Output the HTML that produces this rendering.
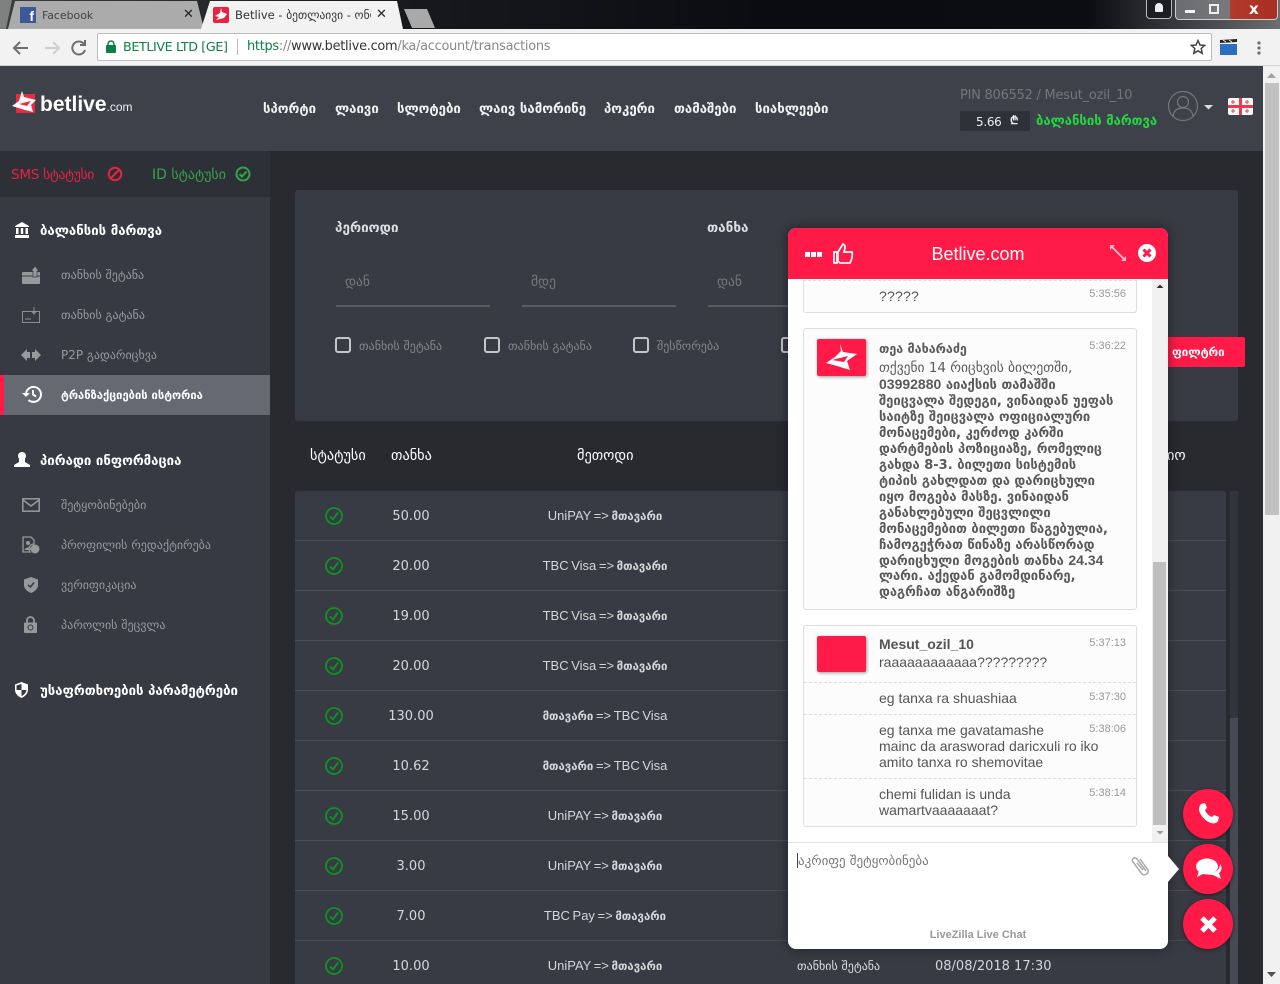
<!DOCTYPE html>
<html lang="ka"><head><meta charset="utf-8"><title>Betlive</title>
<style>
*{box-sizing:border-box}
html,body{margin:0;padding:0;width:1280px;height:984px;overflow:hidden;background:#292a30}
body{position:relative;font-family:"Liberation Sans","DejaVu Sans",sans-serif}
.a{position:absolute;white-space:nowrap}
svg{position:absolute;display:block}
.nav{top:102px;font:bold 13.2px/16px "DejaVu Sans",sans-serif;color:#f2f2f2}
.h{font:bold 13.2px/16px "DejaVu Sans",sans-serif;color:#fff;left:40px}
.s{font:12px/16px "DejaVu Sans",sans-serif;color:#98999c;left:61px}
.line{position:absolute;left:295px;width:931px;height:1px;background:#4a4c57}
.n{left:371px;width:80px;text-align:center;font:13px/16px "DejaVu Sans",sans-serif;color:#d6d6d8;margin-top:1px}
.m{left:480px;width:250px;text-align:center;font:13px/16px "Liberation Sans","DejaVu Sans",sans-serif;word-spacing:-1px;color:#d6d6d8}
.m span{font:bold 11.4px/16px "DejaVu Sans",sans-serif;word-spacing:0}
.c{color:#555;font:14px/16px "Liberation Sans",sans-serif}
.k{color:#5a5a5a;font:bold 13px/16px "DejaVu Sans",sans-serif;left:91px}
.t{color:#999;font:11px/14px "Liberation Sans",sans-serif;right:42px}
.b{position:absolute;left:15px;width:334px;background:#fcfcfc;border:1px solid #ddd;border-radius:3px}
.d{position:absolute;left:16px;width:332px;border-top:1px dashed #ddd}
.cb{position:absolute;top:337px;width:16px;height:16px;border:2px solid #c5c6c8;border-radius:3px}
.cl{top:338px;font:12px/16px "DejaVu Sans",sans-serif;color:#85868b}
.f{font:13.5px/16px "DejaVu Sans",sans-serif;color:#77787d;top:274px}
.u{position:absolute;top:305px;height:2px;background:#5c5c60}
.th{top:448px;font:14.3px/16px "DejaVu Sans",sans-serif;color:#fff}
.fab{position:absolute;left:1183px;width:50px;height:50px;border-radius:50%;background:#ff1a47;box-shadow:0 1px 4px rgba(0,0,0,.5)}
</style></head><body>

<!-- browser chrome -->
<div class="a" style="left:0;top:0;width:1280px;height:29px;background:linear-gradient(90deg,#3a3c3f 0,#1a1c20 25%,#0a0c11 60%,#0b0d12 85%,#6b6d70 100%)"></div>
<svg style="left:0;top:0" width="440" height="30"><path d="M0 0H12L6 29H0Z" fill="#7f8080"/><path d="M15 1H197L204 29H8Z" fill="#ababab"/><path d="M210 1H397L403 29H201Z" fill="#f2f2f2"/><path d="M404 9H427L435 28H412Z" fill="#a9a9a9"/></svg>
<div class="a" style="left:20px;top:7px;width:16px;height:16px;background:#3b5998;color:#fff;font:bold 14px/18px 'Liberation Sans';text-align:right;padding-right:2px;overflow:hidden">f</div>
<div class="a" style="left:42px;top:8px;font:10.9px/16px 'DejaVu Sans';color:#444">Facebook</div>
<div class="a" style="left:183px;top:6px;font:bold 13px/18px 'DejaVu Sans';color:#222">✕</div>
<div class="a" style="left:213px;top:7px;width:16px;height:16px;background:#e8223f;border-radius:2px"></div>
<svg style="left:213px;top:7px" width="16" height="16"><path d="M8 1L9 5L14 7L11 11L3 13L6 10L2 9L7 6Z" fill="#fff"/></svg>
<div class="a" style="left:235px;top:7px;width:136px;overflow:hidden;font:11.5px/16px 'DejaVu Sans';color:#333">Betlive - ბეთლაივი - ონლ</div>
<div class="a" style="left:376px;top:6px;font:bold 13px/18px 'DejaVu Sans';color:#222">✕</div>
<!-- window buttons -->
<div class="a" style="left:1146px;top:0;width:26px;height:19px;background:#1c1e21;border:1px solid #bbb;border-top:0;border-radius:0 0 4px 4px"></div>
<div class="a" style="left:1155px;top:3px;width:8px;height:9px;background:#eee;border-radius:4px 4px 1px 1px"></div>
<div class="a" style="left:1175px;top:0;width:103px;height:20px;background:linear-gradient(90deg,#6a6c6f 0,#77797b 53%,#b23a2b 54%,#a82f22 100%);border:1px solid #ccc;border-top:0;border-radius:0 0 4px 4px"></div>
<div class="a" style="left:1185px;top:10px;width:10px;height:3px;background:#f3f3f3"></div>
<div class="a" style="left:1209px;top:4px;width:10px;height:10px;border:2px solid #eee"></div>
<div class="a" style="left:1249px;top:0;font:bold 15px/18px 'DejaVu Sans';color:#fff">x</div>
<!-- toolbar -->
<div class="a" style="left:0;top:29px;width:1280px;height:37px;background:#f2f2f2;border-bottom:1px solid #d2d2d2"></div>
<svg style="left:10px;top:36px" width="80" height="22" fill="none" stroke-width="2"><path d="M18 12H4M10 6L4 12L10 18" stroke="#6e6e6e"/><path d="M35 12H49M43 6L49 12L43 18" stroke="#cfcfcf"/><path d="M74 8A6.5 6.5 0 1 0 75 14M75 4V9H70" stroke="#6e6e6e"/></svg>
<div class="a" style="left:97px;top:33px;width:1115px;height:28px;background:#fff;border:1px solid #bcbcbc;border-radius:2px"></div>
<svg style="left:105px;top:40px" width="12" height="14"><rect x="1" y="5" width="10" height="8" rx="1" fill="#0b8043"/><path d="M3 6V4A3 3 0 0 1 9 4V6" fill="none" stroke="#0b8043" stroke-width="1.5"/></svg>
<div class="a" style="left:123px;top:39px;font:12.7px/16px 'DejaVu Sans';letter-spacing:-.03em;color:#0b8043">BETLIVE LTD [GE]</div>
<div class="a" style="left:237px;top:39px;width:1px;height:16px;background:#bbb"></div>
<div class="a" style="left:247px;top:39px;font:12.9px/16px 'DejaVu Sans';letter-spacing:-.02em;color:#888"><span style="color:#0b8043">https</span>://<span style="color:#333">www.betlive.com</span>/ka/account/transactions</div>
<svg style="left:1190px;top:39px" width="16" height="16"><path d="M8 1.5L10 6L14.7 6.4L11.2 9.5L12.2 14.3L8 11.8L3.8 14.3L4.8 9.5L1.3 6.4L6 6Z" fill="none" stroke="#444" stroke-width="1.5"/></svg>
<svg style="left:1220px;top:39px" width="18" height="16"><rect y="5" width="17" height="11" fill="#2a6fc0"/><path d="M0 1L17 0V3L0 4Z" fill="#222"/><path d="M3 1L6 3M9 1L12 3" stroke="#eee"/></svg>
<svg style="left:1257px;top:41px" width="4" height="14" fill="#6e6e6e"><circle cx="2" cy="2" r="1.6"/><circle cx="2" cy="7" r="1.6"/><circle cx="2" cy="12" r="1.6"/></svg>

<!-- site header -->
<div class="a" style="left:0;top:66px;width:1263px;height:85px;background:#3e4149"></div>
<svg style="left:11px;top:90px" width="27" height="26"><rect x="5" y="4" width="19" height="19" fill="#ec2a3f"/><path d="M11 1L13 7L25 10L20 15L22 22L14 20L1 16L8 11Z" fill="#fff"/><path d="M8 14L20 11L16 16Z" fill="#ec2a3f"/></svg>
<div class="a" style="left:40px;top:91px;font:bold 21px/28px 'Liberation Sans';color:#fff">betlive<span style="font:12px/16px 'Liberation Sans';color:#eee">.com</span></div>
<div class="a nav" style="left:263px">სპორტი</div>
<div class="a nav" style="left:335px">ლაივი</div>
<div class="a nav" style="left:397px">სლოტები</div>
<div class="a nav" style="left:479px">ლაივ სამორინე</div>
<div class="a nav" style="left:604px">პოკერი</div>
<div class="a nav" style="left:674px">თამაშები</div>
<div class="a nav" style="left:755px">სიახლეები</div>
<div class="a" style="left:960px;top:87px;font:13px/18px 'DejaVu Sans';letter-spacing:-.25px;color:#74767b">PIN 806552 / Mesut_ozil_10</div>
<div class="a" style="left:960px;top:111px;width:70px;height:20px;background:#2f3138;border-radius:2px"></div>
<div class="a" style="left:976px;top:114px;font:12px/16px 'DejaVu Sans';letter-spacing:-.3px;color:#eee">5.66</div>
<div class="a" style="left:1010px;top:113px;font:bold 11px/16px 'DejaVu Sans';color:#eee">₾</div>
<div class="a" style="left:1036px;top:114px;font:bold 13.1px/16px 'DejaVu Sans';color:#22d840">ბალანსის მართვა</div>
<svg style="left:1167px;top:90px" width="48" height="32" fill="none" stroke="#74767b" stroke-width="1.2"><circle cx="16" cy="16" r="14.5"/><circle cx="16" cy="12" r="5.5"/><path d="M6 26C7 20 11 18 16 18S25 20 26 26"/><path d="M37 15H46L41.500 19.500Z" fill="#ddd" stroke="none"/></svg>
<svg style="left:1228px;top:98px" width="26" height="18"><rect width="25" height="17" rx="2" fill="#fafafa"/><path d="M11 0H14V17H11ZM0 7H25V10H0Z" fill="#ec3a4b"/><path d="M5 2V6M3 4H7M19 2V6M17 4H21M5 11V15M3 13H7M19 11V15M17 13H21" stroke="#ec3a4b"/></svg>

<!-- sidebar -->
<div class="a" style="left:0;top:151px;width:270px;height:46px;background:#2e3038"></div>
<div class="a" style="left:0;top:197px;width:270px;height:787px;background:#383a43"></div>
<div class="a" style="left:11px;top:167px;font:13.6px/16px 'DejaVu Sans';letter-spacing:-.3px;color:#e5243f">SMS სტატუსი</div>
<svg style="left:107px;top:166px" width="16" height="16" fill="none" stroke="#e5243f" stroke-width="2"><circle cx="8" cy="8" r="6.300"/><path d="M3.500 12.500L12.500 3.500"/></svg>
<div class="a" style="left:152px;top:167px;font:14px/16px 'DejaVu Sans';color:#36a348">ID სტატუსი</div>
<svg style="left:235px;top:166px" width="16" height="16" fill="none" stroke="#36a348" stroke-width="2"><circle cx="8" cy="8" r="6.500"/><path d="M4.500 8L7 10.500L11.500 5.500"/></svg>

<svg style="left:14px;top:222px" width="16" height="16" fill="#fff"><path d="M8 0L15 4V5H1V4Z"/><path d="M2 6H4.500V12H2ZM6.800 6H9.200V12H6.800ZM11.500 6H14V12H11.500ZM1 13H15V16H1Z"/></svg>
<div class="a h" style="top:224px">ბალანსის მართვა</div>
<svg style="left:22px;top:266px" width="18" height="18"><rect y="6" width="18" height="12" rx="1" fill="#98999c"/><path d="M0 10H18" stroke="#383a43"/><path d="M13 0L17 5H15V11H11V5H9Z" fill="#98999c" stroke="#383a43" stroke-width=".7"/></svg>
<div class="a s" style="top:267px">თანხის შეტანა</div>
<svg style="left:22px;top:306px" width="18" height="18" fill="none" stroke="#8c8d91"><rect x=".5" y="5.500" width="17" height="11"/><path d="M12 1V7M9.500 5L12 8L14.500 5M3 13H9"/></svg>
<div class="a s" style="top:307px">თანხის გატანა</div>
<svg style="left:21px;top:349px" width="20" height="12" fill="#98999c"><path d="M0 6L6 0V3H9V9H6V12ZM20 6L14 12V9H11V3H14V0Z"/></svg>
<div class="a s" style="top:347px">P2P გადარიცხვა</div>
<div class="a" style="left:0;top:375px;width:270px;height:40px;background:#666972"></div>
<div class="a" style="left:0;top:375px;width:4px;height:40px;background:#ff1a47"></div>
<svg style="left:22px;top:385px" width="20" height="18" fill="none" stroke="#fff" stroke-width="2"><path d="M4 9A7.500 7.500 0 1 1 6.500 15"/><path d="M0 8L4 12L8 8" fill="#fff" stroke="none"/><path d="M11 5V9.500L14 11.500"/></svg>
<div class="a s" style="top:388px;color:#fff;font-weight:bold;font-size:11.2px">ტრანზაქციების ისტორია</div>

<svg style="left:14px;top:452px" width="16" height="15" fill="#fff"><circle cx="8" cy="4" r="4"/><path d="M5 7H11L11 10L16 13V15H0V13L5 10Z"/></svg>
<div class="a h" style="top:454px">პირადი ინფორმაცია</div>
<svg style="left:22px;top:498px" width="18" height="15" fill="none" stroke="#98999c" stroke-width="1.500"><rect x=".8" y=".8" width="16.400" height="12.400"/><path d="M1 2L9 8L17 2"/></svg>
<div class="a s" style="top:497px">შეტყობინებები</div>
<svg style="left:22px;top:536px" width="18" height="18" fill="#98999c"><path d="M1 1H9L12 4V8A5 5 0 0 0 8 16H1Z" fill="none" stroke="#98999c" stroke-width="1.300"/><circle cx="6" cy="7" r="2"/><path d="M2.500 14C3 11 9 11 9 12L8 14Z"/><circle cx="13" cy="13" r="4.500"/></svg>
<div class="a s" style="top:537px">პროფილის რედაქტირება</div>
<svg style="left:24px;top:577px" width="14" height="16"><path d="M7 0L14 2.500V8C14 12 10 15 7 16C4 15 0 12 0 8V2.500Z" fill="#98999c"/><path d="M4 8L6.500 10L10 5.500" fill="none" stroke="#383a43" stroke-width="1.500"/></svg>
<div class="a s" style="top:577px">ვერიფიკაცია</div>
<svg style="left:24px;top:616px" width="13" height="17"><path d="M3 7V4.500A3.500 3.500 0 0 1 10 4.500V7" fill="none" stroke="#98999c" stroke-width="1.800"/><rect y="6.500" width="13" height="10.500" rx="1" fill="#98999c"/><circle cx="6.500" cy="11.500" r="2.500" fill="none" stroke="#383a43"/></svg>
<div class="a s" style="top:617px">პაროლის შეცვლა</div>
<svg style="left:15px;top:682px" width="13" height="16"><path d="M6.500 0L13 2.500V8C13 12 9 15 6.500 16C4 15 0 12 0 8V2.500Z" fill="#fff"/><path d="M6.500 2V8H1.500V3.500ZM6.500 8H11.500C11 11 9 13 6.500 14Z" fill="#383a43"/></svg>
<div class="a h" style="top:684px">უსაფრთხოების პარამეტრები</div>

<!-- main -->
<div class="a" style="left:295px;top:190px;width:943px;height:231px;background:#393b44;border-radius:3px"></div>
<div class="a" style="left:335px;top:220px;font:bold 13.5px/16px 'DejaVu Sans';color:#dedee0">პერიოდი</div>
<div class="a" style="left:707px;top:220px;font:bold 13.5px/16px 'DejaVu Sans';color:#dedee0">თანხა</div>
<div class="a f" style="left:345px">დან</div>
<div class="a f" style="left:531px">მდე</div>
<div class="a f" style="left:717px">დან</div>
<div class="u" style="left:336px;width:154px"></div>
<div class="u" style="left:522px;width:154px"></div>
<div class="u" style="left:708px;width:90px"></div>
<div class="cb" style="left:335px"></div><div class="a cl" style="left:359px">თანხის შეტანა</div>
<div class="cb" style="left:484px"></div><div class="a cl" style="left:508px">თანხის გატანა</div>
<div class="cb" style="left:633px"></div><div class="a cl" style="left:657px">შესწორება</div>
<div class="cb" style="left:781px"></div>
<div class="a" style="left:1160px;top:337px;width:85px;height:30px;background:#ff1a47;border-radius:2px"></div>
<div class="a" style="left:1172px;top:344px;font:bold 11.500px/16px 'DejaVu Sans';color:#fff">ფილტრი</div>

<div class="a th" style="left:310px">სტატუსი</div>
<div class="a th" style="left:391px">თანხა</div>
<div class="a th" style="left:577px">მეთოდი</div>
<div class="a th" style="left:1167px">იო</div>

<div class="a" style="left:295px;top:491px;width:931px;height:493px;background:#393b44;border-radius:3px 3px 0 0"></div>
<div class="a" style="left:1230px;top:491px;width:8px;height:493px;background:#33353d"></div>
<div class="a" style="left:1230px;top:718px;width:8px;height:266px;background:#474a55"></div>
<div class="line" style="top:540px"></div><div class="line" style="top:590px"></div><div class="line" style="top:640px"></div><div class="line" style="top:690px"></div><div class="line" style="top:740px"></div><div class="line" style="top:790px"></div><div class="line" style="top:840px"></div><div class="line" style="top:890px"></div><div class="line" style="top:940px"></div>

<svg style="left:325px;top:507px" width="18" height="470" fill="none" stroke="#0d9323" stroke-width="1.800"><g><circle cx="9" cy="9" r="8"/><path d="M5 9.500L8 12.500L13 5.500"/></g><g transform="translate(0 50)"><circle cx="9" cy="9" r="8"/><path d="M5 9.500L8 12.500L13 5.500"/></g><g transform="translate(0 100)"><circle cx="9" cy="9" r="8"/><path d="M5 9.500L8 12.500L13 5.500"/></g><g transform="translate(0 150)"><circle cx="9" cy="9" r="8"/><path d="M5 9.500L8 12.500L13 5.500"/></g><g transform="translate(0 200)"><circle cx="9" cy="9" r="8"/><path d="M5 9.500L8 12.500L13 5.500"/></g><g transform="translate(0 250)"><circle cx="9" cy="9" r="8"/><path d="M5 9.500L8 12.500L13 5.500"/></g><g transform="translate(0 300)"><circle cx="9" cy="9" r="8"/><path d="M5 9.500L8 12.500L13 5.500"/></g><g transform="translate(0 350)"><circle cx="9" cy="9" r="8"/><path d="M5 9.500L8 12.500L13 5.500"/></g><g transform="translate(0 400)"><circle cx="9" cy="9" r="8"/><path d="M5 9.500L8 12.500L13 5.500"/></g><g transform="translate(0 450)"><circle cx="9" cy="9" r="8"/><path d="M5 9.500L8 12.500L13 5.500"/></g></svg>

<div class="a n" style="top:508px">50.00</div><div class="a m" style="top:508px">UniPAY =&gt; <span>მთავარი</span></div>
<div class="a n" style="top:558px">20.00</div><div class="a m" style="top:558px">TBC Visa =&gt; <span>მთავარი</span></div>
<div class="a n" style="top:608px">19.00</div><div class="a m" style="top:608px">TBC Visa =&gt; <span>მთავარი</span></div>
<div class="a n" style="top:658px">20.00</div><div class="a m" style="top:658px">TBC Visa =&gt; <span>მთავარი</span></div>
<div class="a n" style="top:708px">130.00</div><div class="a m" style="top:708px"><span>მთავარი</span> =&gt; TBC Visa</div>
<div class="a n" style="top:758px">10.62</div><div class="a m" style="top:758px"><span>მთავარი</span> =&gt; TBC Visa</div>
<div class="a n" style="top:808px">15.00</div><div class="a m" style="top:808px">UniPAY =&gt; <span>მთავარი</span></div>
<div class="a n" style="top:858px">3.00</div><div class="a m" style="top:858px">UniPAY =&gt; <span>მთავარი</span></div>
<div class="a n" style="top:908px">7.00</div><div class="a m" style="top:908px">TBC Pay =&gt; <span>მთავარი</span></div>
<div class="a n" style="top:958px">10.00</div><div class="a m" style="top:958px">UniPAY =&gt; <span>მთავარი</span></div>
<div class="a" style="left:797px;top:958px;font:12px/16px 'DejaVu Sans';color:#dedee0">თანხის შეტანა</div>
<div class="a" style="left:935px;top:959px;font:13px/16px 'DejaVu Sans';color:#d6d6d8">08/08/2018 17:30</div>

<!-- page scrollbar -->
<div class="a" style="left:1263px;top:66px;width:17px;height:918px;background:#f1f1f1"></div>
<div class="a" style="left:1265px;top:83px;width:14px;height:432px;background:#c1c1c1"></div>
<svg style="left:1263px;top:66px" width="17" height="918" fill="#a3a3a3"><path d="M4 12L8.500 7L13 12Z"/><path d="M4 906L8.500 911L13 906Z" fill="#505050"/></svg>

<!-- chat -->
<div class="a" style="left:788px;top:228px;width:380px;height:721px;background:#fff;border-radius:8px;box-shadow:0 0 12px rgba(0,0,0,.45);overflow:hidden">
  <div class="a" style="left:0;top:0;width:380px;height:51px;background:#ff1a47"></div>
  <div class="a" style="left:0;top:0;width:380px;height:52px;text-align:center;font:18px/52px 'Liberation Sans';color:#fff">Betlive.com</div>
  <div class="a" style="left:364px;top:51px;width:16px;height:563px;background:#f1f1f1"></div>
  <div class="a" style="left:365px;top:334px;width:13px;height:263px;background:#bfbfbf"></div>
  <svg style="left:364px;top:51px" width="16" height="563"><path d="M4.500 9L8 5.500L11.500 9Z" fill="#333"/><path d="M4.500 552L8 555.500L11.500 552Z" fill="#999"/></svg>

  <div class="b" style="top:52px;height:33px;border-top:1px dashed #ddd;border-radius:0 0 3px 3px"></div>
  <div class="a c" style="left:91px;top:60px;letter-spacing:.2px">?????</div>
  <div class="a t" style="top:59px">5:35:56</div>

  <div class="b" style="top:100px;height:282px"></div>
  <div class="a" style="left:29px;top:111px;width:49px;height:37px;background:#ff1a47;border-radius:2px;box-shadow:1px 1px 3px rgba(0,0,0,.4)"></div>
  <svg style="left:29px;top:111px" width="49" height="37"><path d="M23 5L26 13L40 15L30 22L33 31L20 27L9 24L18 18L24 12Z" fill="#fff"/><path d="M15 21L31 17L27 23Z" fill="#ff1a47"/></svg>
  <div class="a t" style="top:111px">5:36:22</div>
  <div class="a k" style="top:113px;font-size:12.500px">თეა მახარაძე</div>
  <div class="a k" style="top:132px;font-weight:normal;font-size:13.500px">თქვენი 14 რიცხვის ბილეთში,</div>
  <div class="a k" style="top:148px"><span style="font:bold 14px/16px 'Liberation Sans'">03992880</span> აიაქსის თამაშში</div>
  <div class="a k" style="top:166px">შეიცვალა შედეგი, ვინაიდან უეფას</div>
  <div class="a k" style="top:182px">საიტზე შეიცვალა ოფიციალური</div>
  <div class="a k" style="top:198px">მონაცემები, კერძოდ კარში</div>
  <div class="a k" style="top:214px">დარტმების პოზიციაზე, რომელიც</div>
  <div class="a k" style="top:230px">გახდა 8-3. ბილეთი სისტემის</div>
  <div class="a k" style="top:246px">ტიპის გახლდათ და დარიცხული</div>
  <div class="a k" style="top:262px">იყო მოგება მასზე. ვინაიდან</div>
  <div class="a k" style="top:278px">განახლებული შეცვლილი</div>
  <div class="a k" style="top:294px">მონაცემებით ბილეთი წაგებულია,</div>
  <div class="a k" style="top:310px">ჩამოგეჭრათ წინაზე არასწორად</div>
  <div class="a k" style="top:324px">დარიცხული მოგების თანხა <span style="font:bold 14px/16px 'Liberation Sans'">24.34</span></div>
  <div class="a k" style="top:341px">ლარი. აქედან გამომდინარე,</div>
  <div class="a k" style="top:357px">დაგრჩათ ანგარიშზე</div>

  <div class="b" style="top:397px;height:202px"></div>
  <div class="a" style="left:29px;top:408px;width:49px;height:36px;background:#ff1a47;border-radius:2px;box-shadow:1px 1px 3px rgba(0,0,0,.4)"></div>
  <div class="a c" style="left:91px;top:408px;font-weight:bold">Mesut_ozil_10</div>
  <div class="a t" style="top:408px">5:37:13</div>
  <div class="a c" style="left:91px;top:426px">raaaaaaaaaaaa?????????</div>
  <div class="d" style="top:454px"></div>
  <div class="a c" style="left:91px;top:462px">eg tanxa ra shuashiaa</div>
  <div class="a t" style="top:462px">5:37:30</div>
  <div class="d" style="top:486px"></div>
  <div class="a c" style="left:91px;top:494px">eg tanxa me gavatamashe</div>
  <div class="a c" style="left:91px;top:510px">mainc da arasworad daricxuli ro iko</div>
  <div class="a c" style="left:91px;top:526px">amito tanxa ro shemovitae</div>
  <div class="a t" style="top:494px">5:38:06</div>
  <div class="d" style="top:550px"></div>
  <div class="a c" style="left:91px;top:558px">chemi fulidan is unda</div>
  <div class="a c" style="left:91px;top:574px">wamartvaaaaaaat?</div>
  <div class="a t" style="top:558px">5:38:14</div>

  <div class="a" style="left:0;top:614px;width:380px;height:1px;background:#e2e2e2"></div>
  <div class="a" style="left:9px;top:625px;width:1px;height:15px;background:#444"></div>
  <div class="a" style="left:10px;top:626px;font:13px/16px 'DejaVu Sans';color:#777">აკრიფე შეტყობინება</div>
  <div class="a" style="left:0;top:700px;width:380px;text-align:center;font:bold 11px/14px 'Liberation Sans';color:#999">LiveZilla Live Chat</div>
</div>
<!-- chat header icons -->
<svg style="left:805px;top:243px" width="50" height="22" fill="#fff"><rect y="9" width="5" height="5"/><rect x="6" y="9" width="5" height="5"/><rect x="12" y="9" width="5" height="5"/><path d="M33 9L38 1C41 2 40 6 39 9H47C48 13 46 18 45 20H35L33 18ZM32 9H29V20H32Z" fill="none" stroke="#fff" stroke-width="1.700"/></svg>
<svg style="left:1110px;top:245px" width="16" height="16" fill="none" stroke="#fbc0cb" stroke-width="1.800"><path d="M2 2L14 14"/><path d="M0 5V0H5ZM16 11V16H11Z" fill="#fbc0cb" stroke="none"/></svg>
<svg style="left:1138px;top:244px" width="18" height="18"><circle cx="9" cy="9" r="9" fill="#fff"/><path d="M5.500 5.500L12.500 12.500M12.500 5.500L5.500 12.500" stroke="#ff1a47" stroke-width="3"/></svg>
<svg style="left:1131px;top:855px" width="20" height="22" fill="none" stroke="#a8a8a8" stroke-width="1.500"><path d="M15 16L6 4C4 1 0 4 2 7L11 19C13 21 18 19 17 15L9 4M6 8L12 15"/></svg>
<svg style="left:1168px;top:856px" width="12" height="26"><path d="M0 0L11 13L0 26Z" fill="#fff"/></svg>

<div class="fab" style="top:789px"></div>
<svg style="left:1198px;top:803px" width="21" height="21"><path d="M3 1L7 0L9 5L7 7C8 10 11 13 14 14L16 12L21 14L20 18C19 20 16 21 13 20C7 18 2 12 1 7C1 4 2 2 3 1Z" fill="#fff"/></svg>
<div class="fab" style="top:844px"></div>
<svg style="left:1195px;top:858px" width="28" height="22" fill="#fff"><ellipse cx="12" cy="8.500" rx="11" ry="8"/><path d="M4 13L2 19L10 15Z"/><path d="M25 6C28 10 26 14 24 15L26 21L18 17H13C20 15 25 12 25 6Z"/></svg>
<div class="fab" style="top:899px"></div>
<svg style="left:1199px;top:915px" width="19" height="19"><path d="M3 3L16 16M16 3L3 16" stroke="#fff" stroke-width="5"/></svg>
</body></html>
